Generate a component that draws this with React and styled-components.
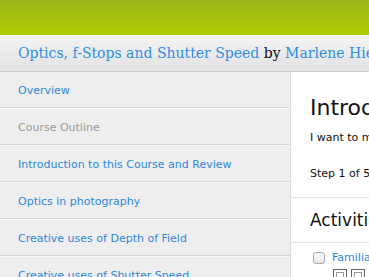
import React from "react";
import styled, { createGlobalStyle } from "styled-components";

const Global = createGlobalStyle`
  html, body { margin: 0; padding: 0; background: #fff; overflow: hidden; }
  body { font-family: "DejaVu Sans", "Liberation Sans", sans-serif; }
`;

const Page = styled.div`
  width: 369px;
  height: 277px;
  overflow: hidden;
  display: flex;
  flex-direction: column;
`;

const TopBar = styled.div`
  height: 35px;
  flex: none;
  background: linear-gradient(#9db61c, #aecb02);
`;

const TitleBar = styled.div`
  height: 36px;
  flex: none;
  display: flex;
  align-items: center;
  padding-left: 18px;
  white-space: nowrap;
  background: linear-gradient(#f3f3f3, #e2e2e2);
  border-bottom: 1px solid #cfcfcf;
  font-family: "DejaVu Serif", "Liberation Serif", serif;
  font-size: 14px;
  color: #111;
`;

const TitleLink = styled.a`
  color: #2e8ee0;
  text-decoration: none;
`;

const Body = styled.div`
  flex: 1;
  display: flex;
  min-height: 0;
`;

const Sidebar = styled.nav`
  width: 290px;
  flex: none;
  background: #eeeeee;
  border-right: 1px solid #dcdcdc;
`;

const NavItem = styled.div`
  height: 36px;
  box-sizing: border-box;
  padding: 2px 0 0 18px;
  display: flex;
  align-items: center;
  border-bottom: 1px solid #d6d6d6;
  box-shadow: 0 1px 0 #f8f8f8;
  font-size: 11px;
  white-space: nowrap;
  color: ${(p) => (p.$muted ? "#9a9a9a" : "#2e88d8")};
  & + & { height: 37px; }
`;

const Main = styled.main`
  flex: none;
  width: 600px;
  background: #fff;
  white-space: nowrap;
`;

const Intro = styled.section`
  padding: 22px 0 0 19px;
  height: 126px;
  border-bottom: 1px solid #e2e2e2;
  box-sizing: border-box;
`;

const H1 = styled.h1`
  margin: 0;
  font-size: 22px;
  font-weight: normal;
  color: #111;
  line-height: 28px;
`;

const Para = styled.p`
  margin: ${(p) => p.$mt}px 0 0;
  font-size: 11px;
  color: #111;
  line-height: 14px;
`;

const SectionHead = styled.div`
  height: 45px;
  box-sizing: border-box;
  padding-left: 19px;
  display: flex;
  align-items: center;
  border-bottom: 1px solid #e2e2e2;
  font-size: 17px;
  color: #111;
`;

const Activity = styled.div`
  display: flex;
  align-items: center;
  gap: 7px;
  padding: 8px 0 0 22px;
  font-size: 11px;
`;

const Check = styled.span`
  width: 10px;
  height: 10px;
  border: 1px solid #aaa;
  border-radius: 3px;
  background: linear-gradient(#fff, #e8e8e8);
`;

const ActLink = styled.a`
  color: #2e88d8;
  text-decoration: none;
`;

const Boxes = styled.div`
  display: flex;
  gap: 4px;
  padding: 5px 0 0 42px;
`;

const SmallBox = styled.span`
  width: 14px;
  height: 14px;
  border: 1px solid #666;
  box-sizing: border-box;
  display: flex;
  align-items: center;
  justify-content: center;
  &::after {
    content: "";
    width: 6px;
    height: 6px;
    border: 1px solid #999;
  }
`;

const nav = [
  { label: "Overview" },
  { label: "Course Outline", muted: true },
  { label: "Introduction to this Course and Review" },
  { label: "Optics in photography" },
  { label: "Creative uses of Depth of Field" },
  { label: "Creative uses of Shutter Speed" },
];

export default function App() {
  return (
    <Page>
      <Global />
      <TopBar />
      <TitleBar>
        <TitleLink href="#">Optics, f-Stops and Shutter Speed</TitleLink>
        &nbsp;by&nbsp;
        <TitleLink href="#">Marlene Hielema</TitleLink>
      </TitleBar>
      <Body>
        <Sidebar>
          {nav.map((n) => (
            <NavItem key={n.label} $muted={n.muted}>
              {n.label}
            </NavItem>
          ))}
        </Sidebar>
        <Main>
          <Intro>
            <H1>Introduction to this Course and Review</H1>
            <Para $mt={9}>I want to make sure you are comfortable with the basics.</Para>
            <Para $mt={22}>Step 1 of 5</Para>
          </Intro>
          <SectionHead>Activities</SectionHead>
          <Activity>
            <Check />
            <ActLink href="#">Familiarize yourself with your camera</ActLink>
          </Activity>
          <Boxes>
            <SmallBox />
            <SmallBox />
          </Boxes>
        </Main>
      </Body>
    </Page>
  );
}
